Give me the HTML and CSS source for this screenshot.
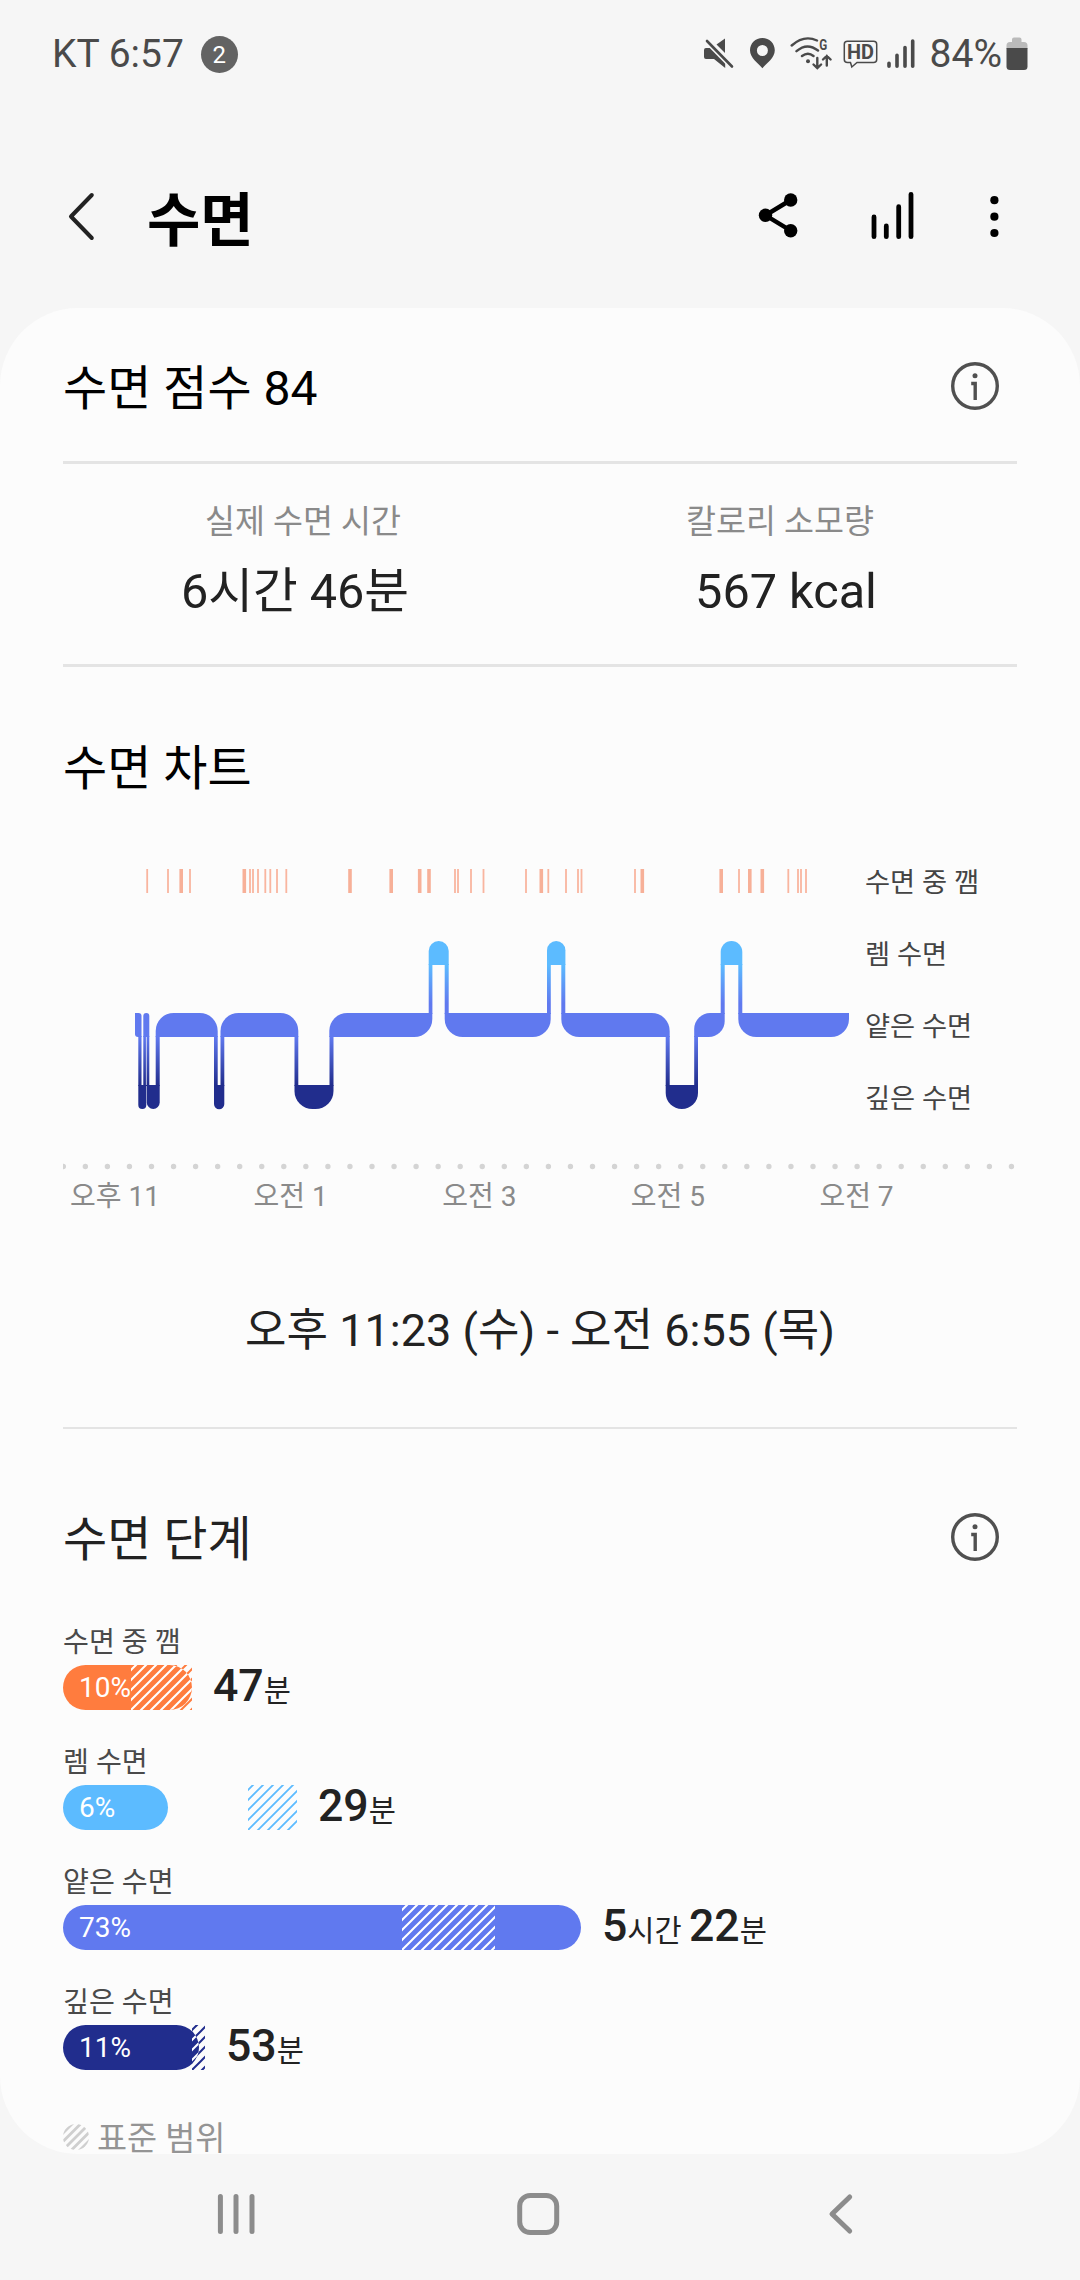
FILE: index.html
```html
<!DOCTYPE html>
<html lang="ko">
<head>
<meta charset="utf-8">
<title>수면</title>
<link rel="stylesheet" href="styles.css">
</head>
<body>
<div class="statusbar">
  <span class="clock">KT 6:57</span>
  <span class="badge">2</span>
  <svg class="status-icons" width="214" height="40" viewBox="700 34 214 40">
    <g fill="#4a4a4a">
      <path d="M705 48h7.5l1.500-1.200L724.200 57V68L713 59H705q-2 0-2-2v-7q0-2 2-2z"/>
      <path d="M715.500 44.600L724 38.500V53z"/>
      <path d="M706 41L731 66.500" stroke="#f6f6f6" stroke-width="6"/>
      <path d="M706 41L731 66.500" stroke="#4a4a4a" stroke-width="2.600" stroke-linecap="round"/>
      <path fill-rule="evenodd" d="M761.400 38c-7 0-12.400 5.400-12.400 12.300 0 7.700 8 12.700 12.400 18 4.400-5.300 12.400-10.300 12.400-18 0-6.900-5.400-12.300-12.400-12.300zm0 7a5.500 5.500 0 1 1 0 11 5.500 5.500 0 0 1 0-11z"/>
      <circle cx="807" cy="61.300" r="2"/>
    </g>
    <g fill="none" stroke="#4a4a4a" stroke-width="2.400" stroke-linecap="round">
      <path d="M790.700 45.500Q803 34.500 816 40.500M795.500 51.200Q806 42 817 50.500M801 56Q807 51.500 812.500 56"/>
      <path d="M816.300 58v9.500M812.500 64.500l3.800 3.600 3.800-3.600M825.800 65.500V56M822 59.500l3.800-3.600 3.800 3.600"/>
      <path stroke-width="1.500" d="M849.500 62.500h-3q-3.200 0-3.200-3V44.300q0-3 3.200-3h26q3.200 0 3.200 3V59.500q0 3-3.200 3H856L850.800 67z"/>
      <path stroke-width="3.600" d="M888 63.300V66.300M896 55.300V66.300M904 47.600V66.300M911.700 41V66.300"/>
    </g>
    <text class="icon-text" x="818.300" y="50" font-size="14.500" textLength="8" lengthAdjust="spacingAndGlyphs">G</text>
    <text class="icon-text" x="846" y="59.300" font-size="20" textLength="27" lengthAdjust="spacingAndGlyphs">HD</text>
  </svg>
  <span class="percent">84%</span>
  <svg class="battery" width="22" height="34" viewBox="0 0 22 34">
    <path fill="#bababa" d="M6 5V2.500Q6 0.500 8 0.500h5.500q2 0 2 2V5H18q3.500 0 3.500 3.500V12H0.500V8.500Q0.500 5 4 5z"/>
    <path fill="#4a4a4a" d="M0.500 11h21v18.500q0 3.500-3.500 3.500H4q-3.500 0-3.500-3.500z"/>
  </svg>
</div>

<header class="appbar">
  <svg class="back" width="32" height="56" viewBox="65 188 32 56"><path d="M91.800 195L71 216.500L91.800 238" fill="none" stroke="#222" stroke-width="4" stroke-linecap="round" stroke-linejoin="round"/></svg>
  <h1>수면</h1>
  <svg class="actions" width="250" height="56" viewBox="754 188 250 56">
    <path d="M790.700 200L765.500 215.300L790.700 230.700" fill="none" stroke="#000" stroke-width="4.400"/>
    <circle cx="790.700" cy="200" r="6.700"/><circle cx="765.500" cy="215.300" r="6.700"/><circle cx="790.700" cy="230.700" r="6.700"/>
    <path d="M874 217V236.700M886.300 226V236.700M898.700 206.700V236.700M911 194.300V236.700" stroke="#000" stroke-width="4.800" stroke-linecap="round"/>
    <circle cx="994.400" cy="200.200" r="4.100"/><circle cx="994.400" cy="216.700" r="4.100"/><circle cx="994.400" cy="233" r="4.100"/>
  </svg>
</header>

<main class="card">
  <section class="score">
    <h2>수면 점수 84</h2>
    <svg class="info" width="48" height="48" viewBox="0 0 48 48"><circle cx="24" cy="24" r="22.300"/><path d="M20.200 21.500h4V38"/><circle class="dot" cx="24" cy="13.800" r="2.500"/></svg>
  </section>
  <section class="stats">
    <div class="stat first"><span class="stat-label">실제 수면 시간</span><span class="stat-value">6시간 46분</span></div>
    <div class="stat second"><span class="stat-label">칼로리 소모량</span><span class="stat-value">567 kcal</span></div>
  </section>
  <section class="chart">
    <h2>수면 차트</h2>
    <div class="plot">
      <svg width="795" height="288" viewBox="63 845 795 288">
        <defs>
          <linearGradient id="down" gradientUnits="userSpaceOnUse" x1="0" y1="1037" x2="0" y2="1085"><stop offset="0" stop-color="#6079ef"/><stop offset="1" stop-color="#212d8d"/></linearGradient>
          <linearGradient id="up" gradientUnits="userSpaceOnUse" x1="0" y1="965" x2="0" y2="1013"><stop offset="0" stop-color="#5cbbff"/><stop offset="0.800" stop-color="#6079ef"/></linearGradient>
        </defs>
        <path fill="none" stroke="#f9b59f" stroke-width="1.800" d="M147.200 869v24M168 869v24M190 869v24M250 869v24M253 869v24M258 869v24M265.300 869v24M270.300 869v24M277 869v24M286.300 869v24M455 869v24M458 869v24M471 869v24M483.500 869v24M526 869v24M548.300 869v24M566 869v24M578 869v24M581.500 869v24M635 869v24M739 869v24M788.300 869v24M798 869v24M801 869v24M806 869v24"/>
        <path fill="none" stroke="#f7b098" stroke-width="3.600" d="M181.200 869v24M244.300 869v24M350 869v24M391.200 869v24M419.700 869v24M429 869v24M541.300 869v24M642.300 869v24M721.200 869v24M749.800 869v24M762.300 869v24"/>
        <path fill="url(#down)" d="M138.300 1036h3.200v50h-3.200zM143.300 1036h6v50h-6zM155.700 1036h4v50h-4zM214 1036h3.700v50H214zM220.500 1036h3.800v50h-3.800zM294.500 1036h3.800v50h-3.800zM329.500 1036h4v50h-4zM665.700 1036h4v50h-4zM694.200 1036h3.800v50h-3.800z"/>
        <path fill="none" stroke="#fcfcfc" stroke-width="0.700" d="M146.400 1037v48"/>
        <path fill="url(#up)" d="M428.700 964h3.700v50h-3.700zM444.700 964h4v50h-4zM547 964h3.800v50H547zM561.300 964h4v50h-4zM720.700 964h4v50h-4zM738.300 964h4v50h-4z"/>
        <g fill="#6079ef">
          <path d="M135 1013h3.500q3 0 3 3v21H138q-3 0-3-3z"/>
          <path d="M143.300 1037v-21q0-3 3-3t3 3v21z"/>
          <path d="M155.700 1037v-6a18 18 0 0 1 18-18h26a18 18 0 0 1 18 18v6z"/>
          <path d="M220.500 1037v-6a18 18 0 0 1 18-18h41.800a18 18 0 0 1 18 18v6z"/>
          <path d="M329.300 1037v-6a18 18 0 0 1 18-18h85v6a18 18 0 0 1-18 18z"/>
          <path d="M444.700 1013h106v6a18 18 0 0 1-18 18h-70a18 18 0 0 1-18-18z"/>
          <path d="M561.300 1013h90.400a18 18 0 0 1 18 18v6h-90.400a18 18 0 0 1-18-18z"/>
          <path d="M694.200 1037v-8a16 16 0 0 1 16-16h14.500v8a16 16 0 0 1-16 16z"/>
          <path d="M738.300 1013H849v6a18 18 0 0 1-18 18h-74.700a18 18 0 0 1-18-18z"/>
        </g>
        <g fill="#5cbbff">
          <path d="M428.700 965v-14a10 10 0 0 1 20 0v14z"/>
          <path d="M547 965v-14.800a9.200 9.200 0 0 1 18.400 0V965z"/>
          <path d="M720.700 965v-13.200a10.800 10.800 0 0 1 21.600 0V965z"/>
        </g>
        <g fill="#212d8d">
          <path d="M138.300 1085h8v20q0 4-4 4t-4-4z"/>
          <path d="M146.800 1085h12.900v17.500a6.400 6.400 0 0 1-12.900 0z"/>
          <path d="M214 1085h10.300v19a5.150 5.150 0 0 1-10.300 0z"/>
          <path d="M294.500 1085h39v6a18 18 0 0 1-18 18h-3a18 18 0 0 1-18-18z"/>
          <path d="M665.700 1085H698v7.900a16.150 16.150 0 0 1-32.300 0z"/>
        </g>
      </svg>
      <ul class="levels"><li>수면 중 깸</li><li>렘 수면</li><li>얕은 수면</li><li>깊은 수면</li></ul>
    </div>
    <svg class="dots" width="954" height="48" viewBox="0 0 954 48"><path d="M0.300 33.500H950" stroke="#d4d4d4" stroke-width="5.400" stroke-linecap="round" stroke-dasharray="0 22.050"/></svg>
    <div class="hours"><span>오후 11</span><span>오전 1</span><span>오전 3</span><span>오전 5</span><span>오전 7</span></div>
    <p class="period">오후 11:23 (수) - 오전 6:55 (목)</p>
  </section>
  <section class="stages">
    <div class="stages-head">
      <h2>수면 단계</h2>
      <svg class="info" width="48" height="48" viewBox="0 0 48 48"><circle cx="24" cy="24" r="22.300"/><path d="M20.200 21.500h4V38"/><circle class="dot" cx="24" cy="13.800" r="2.500"/></svg>
    </div>
    <div class="stage">
      <span class="stage-label">수면 중 깸</span>
      <div class="stage-row">
        <div class="bar">
          <svg width="129" height="45">
            <defs>
              <pattern id="h1" width="10" height="10" patternUnits="userSpaceOnUse" x="68" y="5"><path d="M-2 12L12 -2M-2 2L2 -2M8 12L12 8" stroke="#ff7c3e" stroke-width="2"/></pattern>
              <pattern id="hw1" width="10" height="10" patternUnits="userSpaceOnUse" x="68" y="5"><path d="M-2 12L12 -2M-2 2L2 -2M8 12L12 8" stroke="#fff" stroke-width="2"/></pattern>
              <clipPath id="c1"><rect width="129" height="45" rx="22.500"/></clipPath>
            </defs>
            <rect x="68" width="61" height="45" fill="url(#h1)"/>
            <rect width="129" height="45" rx="22.500" fill="#ff7c3e"/>
            <rect x="68" width="61" height="45" fill="url(#hw1)" clip-path="url(#c1)"/>
          </svg>
          <span class="share">10%</span>
        </div>
        <p class="amount"><b>47</b>분</p>
      </div>
    </div>
    <div class="stage">
      <span class="stage-label">렘 수면</span>
      <div class="stage-row">
        <div class="bar">
          <svg width="234" height="45">
            <defs><pattern id="h2" width="10" height="10" patternUnits="userSpaceOnUse" x="185" y="5"><path d="M-2 12L12 -2M-2 2L2 -2M8 12L12 8" stroke="#5cbbff" stroke-width="1.800"/></pattern></defs>
            <rect width="105" height="45" rx="22.500" fill="#5cbbff"/>
            <rect x="185" width="49" height="45" fill="url(#h2)"/>
          </svg>
          <span class="share">6%</span>
        </div>
        <p class="amount"><b>29</b>분</p>
      </div>
    </div>
    <div class="stage">
      <span class="stage-label">얕은 수면</span>
      <div class="stage-row">
        <div class="bar">
          <svg width="518" height="45">
            <defs><pattern id="h3" width="10" height="10" patternUnits="userSpaceOnUse" x="339" y="5"><path d="M-2 12L12 -2M-2 2L2 -2M8 12L12 8" stroke="#fff" stroke-width="2"/></pattern></defs>
            <rect width="518" height="45" rx="22.500" fill="#6079ef"/>
            <rect x="339" width="93" height="45" fill="url(#h3)"/>
          </svg>
          <span class="share">73%</span>
        </div>
        <p class="amount"><b>5</b>시간 <b>22</b>분</p>
      </div>
    </div>
    <div class="stage">
      <span class="stage-label">깊은 수면</span>
      <div class="stage-row">
        <div class="bar">
          <svg width="142" height="45">
            <defs>
              <pattern id="h4" width="10" height="10" patternUnits="userSpaceOnUse" x="129" y="5"><path d="M-2 12L12 -2M-2 2L2 -2M8 12L12 8" stroke="#212d8d" stroke-width="2"/></pattern>
              <pattern id="hw4" width="10" height="10" patternUnits="userSpaceOnUse" x="129" y="5"><path d="M-2 12L12 -2M-2 2L2 -2M8 12L12 8" stroke="#fff" stroke-width="2"/></pattern>
              <clipPath id="c4"><rect width="136" height="45" rx="22.500"/></clipPath>
            </defs>
            <rect x="129" width="13" height="45" fill="url(#h4)"/>
            <rect width="136" height="45" rx="22.500" fill="#212d8d"/>
            <rect x="129" width="13" height="45" fill="url(#hw4)" clip-path="url(#c4)"/>
          </svg>
          <span class="share">11%</span>
        </div>
        <p class="amount"><b>53</b>분</p>
      </div>
    </div>
    <div class="range-key">
      <svg width="26" height="26" viewBox="0 0 26 26"><defs><clipPath id="ck"><circle cx="13" cy="13" r="13"/></clipPath></defs><path clip-path="url(#ck)" d="M-4 13L13 -4M-4 21.500L21.500 -4M-4 30L30 -4M4.500 30L30 4.500M13 30L30 13" stroke="#cfcfcf" stroke-width="2.800"/></svg>
      <span>표준 범위</span>
    </div>
  </section>
</main>

<nav class="navbar">
  <svg width="40" height="50" viewBox="216 2189 40 50"><path d="M220.400 2196.500V2231.500M236 2196.500V2231.500M252 2196.500V2231.500" stroke="#8c8c8c" stroke-width="5" stroke-linecap="round"/></svg>
  <svg width="50" height="50" viewBox="513 2189 50 50"><rect x="519.700" y="2195.500" width="37" height="37" rx="10.500" fill="none" stroke="#8c8c8c" stroke-width="5"/></svg>
  <svg width="40" height="50" viewBox="820 2189 40 50"><path d="M849.700 2197L832 2214L849.700 2231" fill="none" stroke="#8c8c8c" stroke-width="5" stroke-linecap="round" stroke-linejoin="round"/></svg>
</nav>
</body>
</html>
```
FILE: styles.css
```css
* { box-sizing: border-box; margin: 0; padding: 0; }
body {
  width: 1080px;
  height: 2280px;
  overflow: hidden;
  background: #f6f6f6;
  color: #222;
  font-family: Roboto, "Noto Sans CJK KR", sans-serif;
}
svg { display: block; flex: none; }
h2 { font-size: 48px; font-weight: 400; line-height: 60px; }

.statusbar {
  display: flex;
  align-items: center;
  height: 108px;
  padding-left: 52px;
  color: #4a4a4a;
  font-size: 39px;
  line-height: 40px;
}
.badge {
  width: 37px;
  height: 37px;
  margin-left: 17px;
  border-radius: 50%;
  background: #636363;
  color: #fff;
  font-size: 24px;
  line-height: 38px;
  text-align: center;
}
.status-icons { margin-left: auto; }
.icon-text { fill: #4a4a4a; font-weight: 700; }
.percent { margin-left: 15px; }
.battery { margin-right: 52px; margin-left: 4px; }

.appbar {
  display: flex;
  align-items: center;
  height: 200px;
  padding: 0 76px 0 65px;
}
.appbar svg { margin-top: 16px; }
.appbar h1 {
  margin: 25px auto 0 50px;
  color: #000;
  font-size: 58px;
  font-weight: 700;
  line-height: 70px;
}

.card {
  height: 1846px;
  padding: 0 63px;
  border-radius: 78px;
  background: #fcfcfc;
}
.score {
  display: flex;
  align-items: center;
  justify-content: space-between;
  height: 153px;
  padding: 8px 18px 0 0;
  color: #000;
}
.info { margin-top: -6px; fill: none; stroke: #505050; stroke-width: 3.4; }
.info .dot { fill: #505050; stroke: none; }

.stats {
  display: grid;
  grid-template-columns: 1fr 1fr;
  height: 206px;
  padding-top: 34px;
  border-top: 3px solid #e4e4e4;
  border-bottom: 3px solid #e4e4e4;
}
.stat { display: flex; flex-direction: column; align-items: center; gap: 16px; }
.first .stat-label { margin-left: 3px; }
.first .stat-value { margin-right: 13px; }
.second .stat-label { margin-left: 3px; }
.second .stat-value { margin-left: 15px; }
.stat-label { color: #8a8a8a; font-size: 32.6px; line-height: 48px; }
.stat-value { font-size: 48.6px; line-height: 60px; }

.chart { height: 762px; padding-top: 72px; border-bottom: 2px solid #e4e4e4; }
.chart h2 { color: #000; }
.plot { display: flex; margin-top: 46px; }
.levels {
  display: grid;
  grid-template-rows: repeat(4, 72px);
  padding-left: 7px;
  list-style: none;
  color: #444;
  font-size: 27.3px;
  line-height: 76px;
  white-space: nowrap;
}
.hours {
  display: grid;
  grid-template-columns: repeat(5, 188.6px);
  height: 31px;
  padding-left: 2px;
  color: #8a8a8a;
  font-size: 28px;
  line-height: 32px;
}
.hours span:first-child { padding-left: 5px; }
.period { margin-top: 89px; font-size: 45.1px; line-height: 60px; text-align: center; }

.stages { padding-top: 81px; }
.stages-head {
  display: flex;
  align-items: center;
  justify-content: space-between;
  margin-bottom: 53px;
  padding-right: 18px;
}
.stage { height: 120px; }
.stage-label { display: block; height: 42px; color: #4a4a4a; font-size: 28.2px; line-height: 40px; }
.stage-row { display: flex; gap: 21px; height: 45px; }
.bar { position: relative; }
.share {
  position: absolute;
  top: 0;
  left: 16px;
  color: #fff;
  font-size: 28px;
  line-height: 45px;
}
.amount { font-size: 29.5px; line-height: 42px; white-space: nowrap; }
.amount b { font-size: 44.6px; font-weight: 500; }
.range-key {
  display: flex;
  align-items: center;
  gap: 8px;
  height: 30px;
  margin-top: 21px;
  color: #949494;
  font-size: 32.7px;
  line-height: 30px;
}
.range-key svg { margin-top: -4px; }

.navbar {
  display: flex;
  align-items: center;
  justify-content: space-between;
  height: 126px;
  padding: 0 220px 6px 216px;
}
```
